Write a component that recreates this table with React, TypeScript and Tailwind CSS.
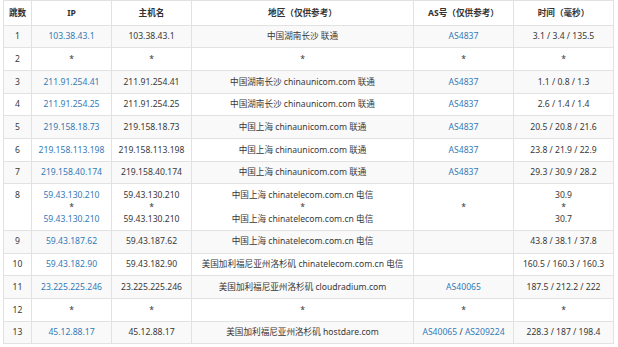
import React from "react";

type Row = {
  hop: string;
  ip: string[];
  host: string[];
  loc: string[];
  as: React.ReactNode;
  time: string[];
};

const Link = ({ children }: { children: React.ReactNode }) => (
  <span className="text-[#337ab7]">{children}</span>
);

const rows: Row[] = [
  { hop: "1", ip: ["103.38.43.1"], host: ["103.38.43.1"], loc: ["中国湖南长沙 联通"], as: <Link>AS4837</Link>, time: ["3.1 / 3.4 / 135.5"] },
  { hop: "2", ip: ["*"], host: ["*"], loc: ["*"], as: "*", time: ["*"] },
  { hop: "3", ip: ["211.91.254.41"], host: ["211.91.254.41"], loc: ["中国湖南长沙 chinaunicom.com 联通"], as: <Link>AS4837</Link>, time: ["1.1 / 0.8 / 1.3"] },
  { hop: "4", ip: ["211.91.254.25"], host: ["211.91.254.25"], loc: ["中国湖南长沙 chinaunicom.com 联通"], as: <Link>AS4837</Link>, time: ["2.6 / 1.4 / 1.4"] },
  { hop: "5", ip: ["219.158.18.73"], host: ["219.158.18.73"], loc: ["中国上海 chinaunicom.com 联通"], as: <Link>AS4837</Link>, time: ["20.5 / 20.8 / 21.6"] },
  { hop: "6", ip: ["219.158.113.198"], host: ["219.158.113.198"], loc: ["中国上海 chinaunicom.com 联通"], as: <Link>AS4837</Link>, time: ["23.8 / 21.9 / 22.9"] },
  { hop: "7", ip: ["219.158.40.174"], host: ["219.158.40.174"], loc: ["中国上海 chinaunicom.com 联通"], as: <Link>AS4837</Link>, time: ["29.3 / 30.9 / 28.2"] },
  { hop: "8", ip: ["59.43.130.210", "*", "59.43.130.210"], host: ["59.43.130.210", "*", "59.43.130.210"], loc: ["中国上海 chinatelecom.com.cn 电信", "*", "中国上海 chinatelecom.com.cn 电信"], as: "*", time: ["30.9", "*", "30.7"] },
  { hop: "9", ip: ["59.43.187.62"], host: ["59.43.187.62"], loc: ["中国上海 chinatelecom.com.cn 电信"], as: "", time: ["43.8 / 38.1 / 37.8"] },
  { hop: "10", ip: ["59.43.182.90"], host: ["59.43.182.90"], loc: ["美国加利福尼亚州洛杉矶 chinatelecom.com.cn 电信"], as: "", time: ["160.5 / 160.3 / 160.3"] },
  { hop: "11", ip: ["23.225.225.246"], host: ["23.225.225.246"], loc: ["美国加利福尼亚州洛杉矶 cloudradium.com"], as: <Link>AS40065</Link>, time: ["187.5 / 212.2 / 222"] },
  { hop: "12", ip: ["*"], host: ["*"], loc: ["*"], as: "*", time: ["*"] },
  { hop: "13", ip: ["45.12.88.17"], host: ["45.12.88.17"], loc: ["美国加利福尼亚州洛杉矶 hostdare.com"], as: (<><Link>AS40065</Link> / <Link>AS209224</Link></>), time: ["228.3 / 187 / 198.4"] },
];

const Lines = ({ items, link, multi }: { items: string[]; link?: boolean; multi: boolean }) => (
  <>
    {items.map((t, i) => (
      <div key={i} className={multi ? "leading-[12.2px]" : ""}>
        {link && t !== "*" ? <Link>{t}</Link> : t}
      </div>
    ))}
  </>
);

export default function App() {
  const td = "border border-[#e2e2e2] px-[2px] py-[4.5px] leading-[12.67px] text-center align-middle whitespace-nowrap";
  const th = "border border-[#e2e2e2] px-[2px] py-[5.5px] leading-[12.67px] text-center font-bold text-[#333]";
  return (
    <div
      className="w-[618px] h-[347px] bg-white pl-[3px] text-[#383838] text-[8.6px]"
      style={{ fontFamily: '"Noto Sans", "Noto Sans CJK SC", sans-serif' }}
    >
      <table className="table-fixed border-collapse w-[610px]">
        <colgroup>
          <col className="w-[28px]" />
          <col className="w-[80px]" />
          <col className="w-[80px]" />
          <col className="w-[222px]" />
          <col className="w-[100px]" />
          <col className="w-[100px]" />
        </colgroup>
        <thead>
          <tr className="bg-white">
            <th className={th}>跳数</th>
            <th className={th}>IP</th>
            <th className={th}>主机名</th>
            <th className={th}>地区（仅供参考）</th>
            <th className={th}>AS号（仅供参考）</th>
            <th className={th}>时间（毫秒）</th>
          </tr>
        </thead>
        <tbody>
          {rows.map((r, i) => {
            const multi = r.ip.length > 1;
            return (
              <tr key={r.hop} className={i % 2 === 0 ? "bg-[#f9f9f9]" : "bg-white"}>
                <td className={td + (multi ? " !align-top !leading-[12.2px]" : "")}>{r.hop}</td>
                <td className={td}><Lines items={r.ip} link multi={multi} /></td>
                <td className={td}><Lines items={r.host} multi={multi} /></td>
                <td className={td}><Lines items={r.loc} multi={multi} /></td>
                <td className={td}>{r.as}</td>
                <td className={td}><Lines items={r.time} multi={multi} /></td>
              </tr>
            );
          })}
        </tbody>
      </table>
    </div>
  );
}
